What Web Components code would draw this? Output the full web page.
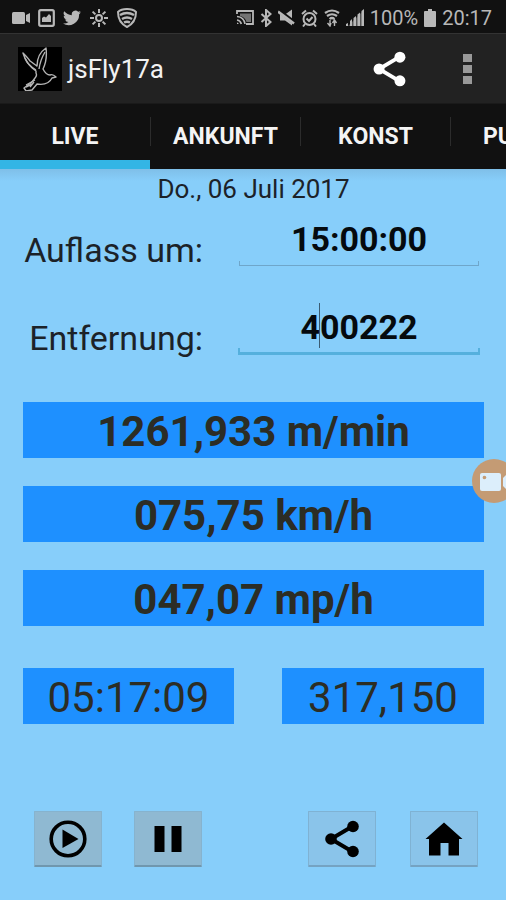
<!DOCTYPE html>
<html lang="de">
<head>
<meta charset="utf-8">
<meta name="viewport" content="width=device-width, initial-scale=1">
<title>jsFly17a</title>
<style>
  html { min-height: 100%; background: #87cefa; }
  body { margin: 0; font-family: Roboto, "Liberation Sans", sans-serif; color: #1c2228; }
</style>
</head>
<body>
<fly-app></fly-app>
<script>
const define = (name, html, setup) => {
  const template = document.createElement('template');
  template.innerHTML = html;
  customElements.define(name, class extends HTMLElement {
    connectedCallback() {
      if (this.shadowRoot) return;
      this.attachShadow({ mode: 'open' }).append(template.content.cloneNode(true));
      if (setup) setup(this, this.shadowRoot);
    }
  });
};

/* name: [viewBox width, viewBox height, markup] */
const ICONS = {
  camera: [18, 14, '<rect y="1" width="13" height="12" rx="1.5"/><path d="M14 4l4-2v10l-4-2z"/>'],
  image: [17, 18, '<rect x="1.2" y="1.2" width="14.6" height="15.6" rx="1.5" fill="none" stroke="currentColor" stroke-width="2.2"/><path d="M4 13V9l2-1.500 2 1 3-3.500 2 2v6z"/>'],
  bird: [24, 20, '<path d="M24 2.400a10 10 0 0 1-2.800.8A5 5 0 0 0 23.300.5a10 10 0 0 1-3.100 1.200 4.900 4.900 0 0 0-8.400 4.500A14 14 0 0 1 1.700 1a4.900 4.900 0 0 0 1.500 6.600A5 5 0 0 1 1 7a4.900 4.900 0 0 0 3.900 4.900 5 5 0 0 1-2.200.1 4.900 4.900 0 0 0 4.600 3.400A10 10 0 0 1 0 17.400 14 14 0 0 0 21.500 5 10 10 0 0 0 24 2.400z"/>'],
  sun: [20, 20, '<circle cx="10" cy="10" r="3" fill="none" stroke="currentColor" stroke-width="2"/><path d="M10 1v4M10 15v4M1 10h4M15 10h4M3.600 3.600l2.800 2.800M13.600 13.600l2.800 2.800M16.400 3.600l-2.800 2.800M6.400 13.600l-2.800 2.800" stroke="currentColor" stroke-width="2"/>'],
  shield: [20, 20, '<path d="M10 1C6 1 3 2 1 4c0 6 3 12 9 15 6-3 9-9 9-15-2-2-5-3-9-3z" fill="none" stroke="currentColor" stroke-width="2"/><path d="M3 7q7-4 14 0M5 11q5-3 10 0M7 14.500q3-1.500 6 0" fill="none" stroke="currentColor" stroke-width="2.400"/>'],
  cast: [18, 15, '<path d="M1 4V1h16v13h-7" fill="none" stroke="currentColor" stroke-width="1.800"/><path d="M4 3.500h11V12h-4.500Q9 7 4 6z" opacity=".6"/><path d="M1 6.500q7 .5 8 7.500M1 10q3.500.5 4.300 4" fill="none" stroke="currentColor" stroke-width="1.600"/><path d="M1 12.200l2 1.800H1z"/>'],
  bluetooth: [12, 18, '<path d="M1.500 5l9 8L6 17V1l4.500 4-9 8" fill="none" stroke="currentColor" stroke-width="2"/>'],
  mute: [17, 17, '<path d="M2 5.500h5l7-5v16l-7-5H2z"/><path d="M0 1l17 13" stroke="#111" stroke-width="4"/><path d="M0 2.500l16 12" stroke="currentColor" stroke-width="2.600"/>'],
  alarm: [17, 18, '<circle cx="8.500" cy="10" r="6" fill="none" stroke="currentColor" stroke-width="2"/><path d="M5.500 9.500l2.500 2.500 3.500-4M1 5l4-3.500M16 5l-4-3.500M4 15l-2 2.500M13 15l2 2.500" fill="none" stroke="currentColor" stroke-width="2"/>'],
  wifi: [16, 18, '<path d="M1 4q7-5 14 0M3 7q5-3.500 10 0M5.500 10Q8 8 10.500 10" fill="none" stroke="currentColor" stroke-width="2.200"/><path d="M6 11v5M3.500 14l2.500 3 1-3M10.500 17v-5M8.500 14l2-3 2 3" fill="none" stroke="currentColor" stroke-width="1.400"/>'],
  signal: [18, 17, '<path d="M0 17v-2l2-1v3zM4 17v-5l2-2v7zM7.500 17V9l2.500-2v10zM11.500 17V5.500l2.500-2V17zM15.500 17V2L18 0v17z"/><path d="M2 17L18 1v16z" opacity=".4"/>'],
  battery: [12, 18, '<path d="M4 0h4v2h3q1 0 1 1v14q0 1-1 1H1q-1 0-1-1V3q0-1 1-1h3z"/>'],
  share: [34, 38, '<path d="M28 6L6 19 28 32" fill="none" stroke="currentColor" stroke-width="4"/><circle cx="28" cy="6.500" r="5.800"/><circle cx="6" cy="19" r="5.800"/><circle cx="28" cy="31.500" r="5.800"/>'],
  more: [9, 32, '<path d="M0 1h9v8H0zM0 12h9v8H0zM0 23h9v8H0z"/>'],
  play: [38, 38, '<circle cx="19" cy="19" r="16.800" fill="none" stroke="currentColor" stroke-width="3.600"/><path d="M13.500 9.500v18.500L29.500 19z"/>'],
  pause: [38, 38, '<path d="M5.500 6h10v26h-10zM22.500 6h10v26h-10z"/>'],
  home: [38, 38, '<path d="M19 2.500L37.500 19H34v16.500H23.500V23h-8v12.500H4V19H.5z"/>'],
  dove: [44, 44, '<g fill="none" stroke="#b4b4b4" stroke-width="1.400" stroke-linejoin="round"><path d="M18 24C11 19 7 13 5 6c3 3 5 5 7 8 3 2 5 4 7 5 0-8 3-14 9-18 1 8 0 15-3 21 2 4 4 6 7 6 2-1 4 0 6 2l-4 1c-3 6-9 7-15 6l-5 6-6 1-2-3 8-6 3-4c2-2 2-3 1-5z"/><path d="M7 11c2 6 6 9 11 12M27 5c-3 5-5 10-6 17M8 38l9-5M12 40l4-5M8 40l6-3"/></g>']
};
const icon = (name, w, h) => {
  const [vw, vh, markup] = ICONS[name];
  return `<svg width="${w || vw}" height="${h || vh}" viewBox="0 0 ${vw} ${vh}" fill="currentColor" aria-hidden="true">${markup}</svg>`;
};

define('status-bar', `
<style>
  :host { display: flex; justify-content: space-between; align-items: center; height: 34px; padding: 2px 14px 0 12px; background: #111; color: #b8b8b8; font-size: 20px; border-bottom: 1px solid #333; box-sizing: border-box; }
  div { display: flex; align-items: center; gap: 8px; }
  .sys { gap: 6px; }
  svg { flex: none; display: block; }
</style>
<div>${icon('camera')}${icon('image')}${icon('bird', 18, 16)}${icon('sun')}${icon('shield')}</div>
<div class="sys">${icon('cast')}${icon('bluetooth')}${icon('mute')}${icon('alarm')}${icon('wifi')}${icon('signal')}<span>100%</span>${icon('battery')}<time>20:17</time></div>`);

define('app-bar', `
<style>
  :host { display: flex; align-items: center; height: 69px; padding: 0 34px 0 18px; background: #222; color: #f2f2f2; box-sizing: border-box; }
  .logo { background: #000; margin-right: 6px; }
  h1 { flex: 1; margin: 0; font-size: 26px; font-weight: 400; line-height: 30px; padding-top: 1px; }
  button { border: 0; padding: 0; background: none; color: #fff; }
  .more { margin-left: 57px; color: #999; }
  svg { display: block; }
</style>
<div class="logo">${icon('dove')}</div>
<h1><slot></slot></h1>
<button aria-label="Teilen">${icon('share', 33, 36)}</button>
<button class="more" aria-label="Menü">${icon('more')}</button>`);

define('tab-item', `
<style>
  :host { flex: 0 0 150px; display: flex; }
  button { flex: 1; min-width: 0; border: 0; padding: 9px 0 0; background: none; color: #f4f4f4; font: 700 23px Roboto, "Liberation Sans", sans-serif; border-bottom: 9px solid transparent; }
  :host([selected]) button { border-color: #33b5e5; }
  :host(:not(:first-of-type)) button { border-left: 1px solid #2c2c2c; border-image: linear-gradient(transparent 15px, #2c2c2c 15px, #2c2c2c 49px, transparent 49px) 0 0 0 1; }
  :host([last]) { flex: 1 0 0; min-width: 0; }
  :host([last]) button { text-align: left; padding-left: 32px; white-space: nowrap; }
</style>
<button role="tab"><slot></slot></button>`, (host, root) => {
  root.querySelector('button').setAttribute('aria-selected', host.hasAttribute('selected'));
});

define('tab-strip', `
<style>
  :host { display: flex; height: 66px; overflow: hidden; background: #111; border-top: 1px solid #1a1a1a; box-sizing: border-box; }
</style>
<slot></slot>`);

define('entry-field', `
<style>
  :host { display: grid; grid-template-columns: 180px 1fr; gap: 36px; align-items: center; }
  label { font-size: 34px; line-height: 32px; text-align: right; white-space: nowrap; padding-top: 24px; display: flex; justify-content: flex-end; }
  .box { position: relative; display: flex; }
  input { flex: 1; min-width: 0; width: 100%; height: 56px; box-sizing: border-box; border: 0; padding: 2px 0 0; background: none; outline: 0; color: #050a0e; font: 700 34px Roboto, "Liberation Sans", sans-serif; text-align: center; }
  .line { position: absolute; left: 0; right: 0; bottom: 0; height: 5px; box-sizing: border-box; border: 1px solid #6fa6ca; border-top: 0; }
  .caret { display: none; position: absolute; left: calc(50% - 40px); top: 5px; width: 1px; height: 45px; background: #3b5c72; }
  :host([active]) .line { left: -1px; right: -1px; bottom: -1px; height: 7px; border: 3px solid #55b0dd; border-width: 0 2px 3px; }
  :host([active]) .caret { display: block; }
</style>
<label for="f"><slot></slot></label>
<div class="box"><input id="f" type="text"><span class="line"></span><span class="caret"></span></div>`, (host, root) => {
  root.querySelector('input').value = host.getAttribute('value');
});

define('value-box', `
<style>
  :host { display: block; padding-top: 4px; background: #1e90ff; color: #2c2d25; font-size: 42px; line-height: 52px; text-align: center; font-weight: 700; white-space: nowrap; }
  :host([light]) { font-weight: 400; }
</style>
<output><slot></slot></output>`);

define('tool-button', `
<style>
  :host { display: block; }
  button { display: flex; align-items: center; justify-content: center; width: 68px; height: 56px; padding: 0; border: 1px solid #86b3ce; border-bottom: 2px solid #7097ae; background: #8fb9d2; color: #000; border-radius: 1px; }
  :host([flat]) button { background: #8ac4ea; border-color: #7fb2d3; border-bottom-color: #75a3c2; }
</style>
<button></button>`, (host, root) => {
  const b = root.querySelector('button');
  b.setAttribute('aria-label', host.getAttribute('label'));
  b.innerHTML = icon(host.getAttribute('icon'));
});

define('record-bubble', `
<style>
  :host { position: absolute; right: -10px; top: 459px; width: 44px; height: 44px; border-radius: 50%; background: #c49b74; color: #dceefb; overflow: hidden; }
  svg { display: block; margin: 14px 0 0 8px; }
</style>
<svg width="32" height="18" viewBox="0 0 32 18" fill="currentColor" aria-hidden="true"><rect width="21" height="18" rx="2"/><path d="M23 5l4-4h4v16h-4l-4-4z"/><circle cx="4.500" cy="4.500" r="1.800" fill="#c49b74"/></svg>`);

define('fly-app', `
<style>
  :host { display: block; position: relative; overflow: hidden; background: #87cefa; min-height: 100vh; }
  main { display: block; padding: 6px 22px 32px 23px; background: linear-gradient(#7fbfe8, #87cefa 12px); }
  .date { margin: 0; text-align: center; font-size: 26px; line-height: 28px; }
  form { display: grid; gap: 32px; padding: 7px 5px 0 0; }
  .speeds { display: grid; gap: 28px; margin-top: 48px; }
  .pair { display: grid; grid-template-columns: 211fr 202fr; gap: 48px; margin-top: 42px; }
  .tools { display: flex; justify-content: space-between; margin-top: 87px; padding: 0 6px 0 11px; }
  .tools div { display: flex; gap: 32px; }
  .tools div + div { gap: 34px; }
</style>
<status-bar></status-bar>
<app-bar>jsFly17a</app-bar>
<tab-strip role="tablist"><tab-item selected>LIVE</tab-item><tab-item>ANKUNFT</tab-item><tab-item>KONST</tab-item><tab-item last>PU</tab-item></tab-strip>
<main>
  <p class="date">Do., 06 Juli 2017</p>
  <form>
    <entry-field value="15:00:00">Auflass um:</entry-field>
    <entry-field value="400222" active>Entfernung:</entry-field>
  </form>
  <div class="speeds"><value-box>1261,933 m/min</value-box><value-box>075,75 km/h</value-box><value-box>047,07 mp/h</value-box></div>
  <div class="pair"><value-box light>05:17:09</value-box><value-box light>317,150</value-box></div>
  <div class="tools">
    <div><tool-button icon="play" label="Start"></tool-button><tool-button icon="pause" label="Pause"></tool-button></div>
    <div><tool-button flat icon="share" label="Teilen"></tool-button><tool-button flat icon="home" label="Startseite"></tool-button></div>
  </div>
</main>
<record-bubble></record-bubble>`);
</script>
</body>
</html>
